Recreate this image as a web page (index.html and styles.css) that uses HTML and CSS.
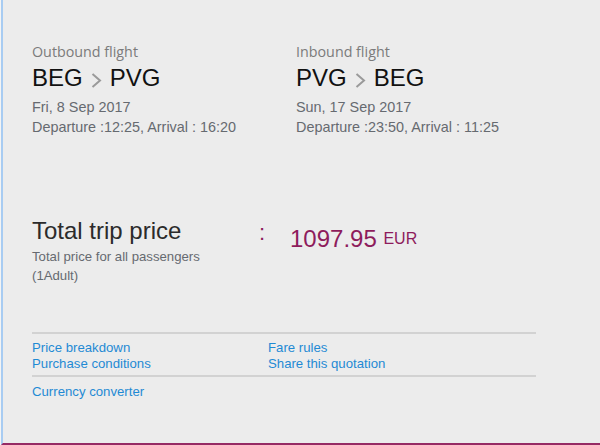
FILE: index.html
```html
<!DOCTYPE html>
<html>
<head>
<meta charset="utf-8">
<link rel="stylesheet" href="styles.css">
</head>
<body>
<div class="page">
  <div class="content">
    <div class="flights">
      <div class="flight">
        <div class="flight-label">Outbound flight</div>
        <div class="route">BEG<svg class="chev" width="27" height="16" viewBox="0 0 27 16"><polyline points="9.5,2 17,8.5 9.5,15" fill="none" stroke="#9a9a9a" stroke-width="2"/></svg>PVG</div>
        <div class="info">Fri, 8 Sep 2017</div>
        <div class="info">Departure :12:25, Arrival : 16:20</div>
      </div>
      <div class="flight">
        <div class="flight-label">Inbound flight</div>
        <div class="route">PVG<svg class="chev" width="27" height="16" viewBox="0 0 27 16"><polyline points="9.5,2 17,8.5 9.5,15" fill="none" stroke="#9a9a9a" stroke-width="2"/></svg>BEG</div>
        <div class="info">Sun, 17 Sep 2017</div>
        <div class="info">Departure :23:50, Arrival : 11:25</div>
      </div>
    </div>
    <div class="price-row">
      <div class="price-label">
        <div class="price-title">Total trip price</div>
        <div class="price-sub">Total price for all passengers<br>(1Adult)</div>
      </div>
      <div class="colon">:</div>
      <div class="amount">1097.95 <span class="cur">EUR</span></div>
    </div>
    <div class="links">
      <div class="link-grid">
        <a class="link" href="#">Price breakdown</a>
        <a class="link" href="#">Fare rules</a>
        <a class="link" href="#">Purchase conditions</a>
        <a class="link" href="#">Share this quotation</a>
      </div>
      <div class="link-single">
        <a class="link" href="#">Currency converter</a>
      </div>
    </div>
  </div>
</div>
</body>
</html>
```
FILE: styles.css
```css
html, body {
  margin: 0;
  padding: 0;
  background: #f4f4f4;
}
.page {
  margin-left: 1px;
  width: 599px;
  height: 445px;
  box-sizing: border-box;
  background: #ececec;
  border-left: 2px solid #a8ccf2;
  border-bottom: 2px solid #962a64;
  font-family: "Liberation Sans", Arial, sans-serif;
}
.content {
  padding: 42px 0 0 29px;
  width: 504px;
}
.flights {
  display: grid;
  grid-template-columns: 264px 1fr;
}
.flight-label {
  font-family: "Open Sans", sans-serif;
  font-size: 14.3px;
  color: #7b7b7b;
  line-height: 20px;
}
.route {
  font-size: 24px;
  color: #111;
  line-height: 28px;
  margin-top: 2px;
  display: flex;
  align-items: center;
}
.chev {
  display: block;
  margin-top: 4px;
}
.info {
  font-size: 14.4px;
  color: #666a70;
  line-height: 20px;
}
.route + .info {
  margin-top: 5px;
}
.price-row {
  display: flex;
  margin-top: 80px;
}
.price-label {
  width: 227px;
}
.price-title {
  font-size: 24px;
  color: #2b2b2b;
  line-height: 28px;
}
.price-sub {
  font-size: 13.2px;
  color: #666a70;
  line-height: 19px;
  margin-top: 2px;
}
.colon {
  width: 31px;
  color: #8e1c5c;
  font-size: 22px;
  line-height: 28px;
  padding-top: 2px;
}
.amount {
  color: #8e1c5c;
  font-size: 24px;
  line-height: 28px;
  padding-top: 8px;
}
.cur {
  font-size: 16px;
  position: relative;
  top: -3px;
}
.links {
  margin-top: 47px;
}
.link-grid {
  display: grid;
  grid-template-columns: 236px 1fr;
  border-top: 2px solid #d2d2d2;
  border-bottom: 2px solid #d2d2d2;
  padding: 6px 0 3px;
}
.link {
  font-size: 13.2px;
  line-height: 16px;
  color: #1f8ad4;
  text-decoration: none;
}
.link-single {
  padding-top: 5px;
}
```
